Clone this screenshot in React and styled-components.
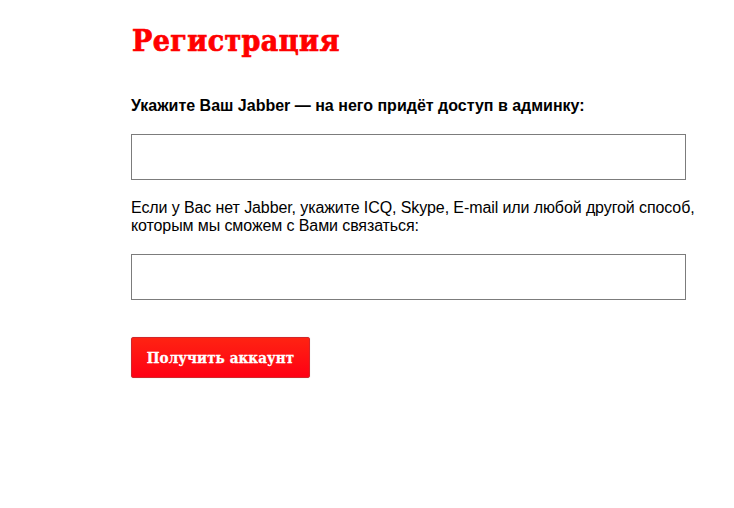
import styled, { createGlobalStyle } from 'styled-components'

const Global = createGlobalStyle`
  html, body {
    margin: 0;
    padding: 0;
    background: #fff;
  }
  body {
    font-family: "Liberation Sans", Arial, sans-serif;
    color: #000;
  }
`

const Page = styled.div`
  width: 734px;
  height: 508px;
  box-sizing: border-box;
  padding: 18px 0 0 131px;
`

const Form = styled.form`
  width: 555px;
  display: flex;
  flex-direction: column;
`

const Title = styled.h1`
  margin: 0 0 0 1px;
  font-family: "DejaVu Serif Condensed", "DejaVu Serif", serif;
  font-weight: 700;
  font-size: 30px;
  line-height: 46px;
  letter-spacing: 0.4px;
  color: #ff0000;
  -webkit-text-stroke: 0.7px #ff0000;
`

const Label = styled.label`
  display: block;
  margin: ${({ $top }) => $top}px 0 0;
  font-size: 16px;
  line-height: 18px;
  font-weight: ${({ $bold }) => ($bold ? 700 : 400)};
  letter-spacing: ${({ $bold }) => ($bold ? '0' : '-0.1px')};
  width: ${({ $bold }) => ($bold ? 'auto' : '580px')};
`

const Field = styled.input`
  display: block;
  box-sizing: border-box;
  width: 555px;
  height: 46px;
  margin: ${({ $top }) => $top}px 0 0;
  padding: 0 8px;
  border: 1px solid #7c7c7c;
  border-radius: 0;
  background: #fff;
  font: 16px "Liberation Sans", Arial, sans-serif;
  outline: none;
`

const Submit = styled.button`
  align-self: flex-start;
  margin-top: 37px;
  width: 179px;
  height: 41px;
  box-sizing: border-box;
  border: 1px solid #d2262a;
  border-radius: 2px;
  background: linear-gradient(#ff2312, #ff0014);
  box-shadow: 0 0 1px rgba(0, 0, 0, 0.25);
  color: #fff;
  font-family: "DejaVu Serif Condensed", "DejaVu Serif", serif;
  font-weight: 700;
  font-size: 15px;
  letter-spacing: 0.1px;
  -webkit-text-stroke: 0.3px #fff;
  cursor: pointer;
`

export default function App() {
  return (
    <>
      <Global />
      <Page>
        <Form onSubmit={(e) => e.preventDefault()}>
          <Title>Регистрация</Title>
          <Label $bold $top={33} htmlFor="jabber">
            Укажите Ваш Jabber — на него придёт доступ в админку:
          </Label>
          <Field id="jabber" type="text" $top={19} />
          <Label $top={19} htmlFor="contact">
            Если у Вас нет Jabber, укажите ICQ, Skype, E-mail или любой другой способ, которым мы сможем с Вами связаться:
          </Label>
          <Field id="contact" type="text" $top={19} />
          <Submit type="submit">Получить аккаунт</Submit>
        </Form>
      </Page>
    </>
  )
}
